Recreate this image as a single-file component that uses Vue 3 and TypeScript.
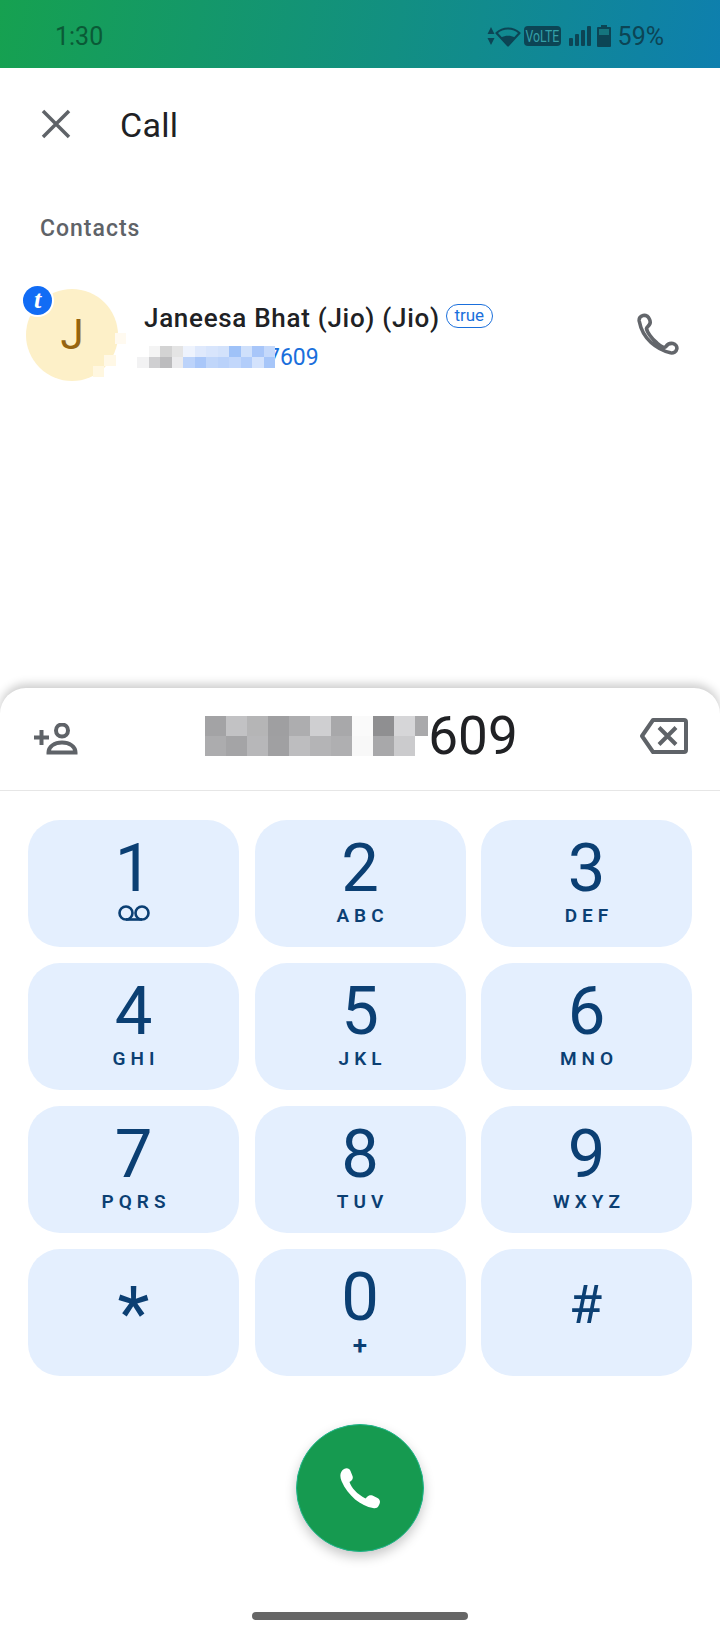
<script setup lang="ts">
interface Key {
  digit: string
  sub?: string
}

const keys: Key[] = [
  { digit: '1' },
  { digit: '2', sub: 'ABC' },
  { digit: '3', sub: 'DEF' },
  { digit: '4', sub: 'GHI' },
  { digit: '5', sub: 'JKL' },
  { digit: '6', sub: 'MNO' },
  { digit: '7', sub: 'PQRS' },
  { digit: '8', sub: 'TUV' },
  { digit: '9', sub: 'WXYZ' },
  { digit: '*' },
  { digit: '0', sub: '+' },
  { digit: '#' },
]

// pixelated part of the phone numbers, as in the screenshot
const dialBlur = [
  '#a3a3a5', '#c2c2c4', '#b5b5b6', '#9f9fa1', '#adadaf', '#cfcfd1', '#a8a8aa', '#fafafa', '#8f8f91', '#d6d6d8', '#a9a9ab',
  '#acacae', '#a4a4a6', '#b7b7b9', '#a0a0a2', '#bdbdbf', '#b4b4b6', '#afafb1', '#f8f8f8', '#a8a8aa', '#cbcbcd', '#ffffff',
]
const rowBlur = [
  '#ffffff', '#f4f4f4', '#d3d3d3', '#e4e4e4', '#eef3fd', '#dfe9fc', '#d8e5fc', '#d3e2fb', '#9fc2f8', '#cfe0fb', '#a8c6f9', '#c5d9fb',
  '#f2f2f3', '#cfcfd1', '#bcbcbe', '#ebebed', '#bcd3fa', '#a9c7f9', '#c0d6fa', '#bad2fa', '#c2d7fb', '#b2cdfa', '#d3e2fc', '#a7c6f9',
]
</script>

<template>
  <div class="page">
    <header class="status">
      <span class="time">1:30</span>
      <div class="status-icons">
        <svg class="arrows" width="8" height="20" viewBox="0 0 8 20">
          <path d="M4 1l3.500 7h-7zM4 19l-3.500-7h7z" />
        </svg>
        <svg class="wifi" width="26" height="22" viewBox="0 0 26 22">
          <path d="M13 20.500L1.500 8c6.500-6 16.500-6 23 0z" fill="none" stroke="currentColor" stroke-width="2.200" stroke-linejoin="round" />
          <path d="M13 21L6 12.500c4.500-2.500 9.500-2.500 14 0z" />
        </svg>
        <span class="volte"><span>VoLTE</span></span>
        <svg class="signal" width="22" height="20" viewBox="0 0 22 20">
          <rect x="0" y="12" width="4" height="8" rx="1" />
          <rect x="6" y="8" width="4" height="12" rx="1" />
          <rect x="12" y="4" width="4" height="16" rx="1" />
          <rect x="18" y="0" width="4" height="20" rx="1" />
        </svg>
        <svg class="battery" width="14" height="22" viewBox="0 0 14 22">
          <path d="M4 0h6v2h3a1 1 0 0 1 1 1v18a1 1 0 0 1-1 1H1a1 1 0 0 1-1-1V3a1 1 0 0 1 1-1h3z" />
          <rect x="2" y="4" width="10" height="6" fill="#1a8a90" opacity="0.7" />
        </svg>
        <span class="percent">59%</span>
      </div>
    </header>

    <main class="main">
      <div class="toolbar">
        <svg class="close" width="30" height="30" viewBox="0 0 30 30">
          <path d="M2 2l26 26M28 2L2 28" />
        </svg>
        <h1 class="title">Call</h1>
      </div>
      <div class="section">Contacts</div>
      <div class="contact">
        <div class="avatar">
          J
          <span class="badge"><i>t</i></span>
          <span class="av-blur b1" />
          <span class="av-blur b2" />
          <span class="av-blur b3" />
        </div>
        <div class="info">
          <div class="name-line">
            <span class="name">Janeesa Bhat (Jio) (Jio)</span>
            <span class="true-tag">true</span>
          </div>
          <div class="number-line">
            <div class="row-blur">
              <span v-for="(c, i) in rowBlur" :key="i" :style="{ background: c }" />
            </div>
            <span class="number">7609</span>
          </div>
        </div>
        <svg class="contact-call" width="42" height="42" viewBox="0 0 42 42">
          <path d="M6 2.500C3.500 3 1.800 5.200 2.200 8 3.800 16.500 8 24 14 29.500 19.500 34.500 26 38 33.500 39.800 36.500 40.300 39.300 38.800 39.800 36 40.300 33.500 38.500 31 36 30.500 33 30 30.500 31 29 33.500 27.500 35.500 24 33.500 20 30 14.500 25.500 9.800 18.500 9.500 15.500 9.800 14 12 13 13 10.500 13.800 8 12 4.500 10 3 8.800 2.300 7.500 2.200 6 2.500z" />
        </svg>
      </div>
    </main>

    <section class="sheet">
      <div class="dial-row">
        <svg class="add" width="46" height="32" viewBox="0 0 46 32">
          <path class="plus" d="M0 14.500h15M7.500 7v15" />
          <circle cx="28" cy="7.500" r="6" />
          <path class="dome" d="M14.500 29.500c0-6 6-10 13.500-10s13.500 4 13.500 10z" />
        </svg>
        <div class="dialed">
          <div class="dial-blur">
            <span v-for="(c, i) in dialBlur" :key="i" :style="{ background: c }" />
          </div>
          <span class="dial-num">609</span>
        </div>
        <svg class="backspace" width="48" height="36" viewBox="0 0 48 36">
          <path d="M13 2h31a2 2 0 0 1 2 2v28a2 2 0 0 1-2 2H13L2 18z" />
          <path d="M19 9.500l17 17M36 9.500l-17 17" />
        </svg>
      </div>

      <div class="keypad">
        <button v-for="k in keys" :key="k.digit" class="key">
          <span class="digit" :class="{ star: k.digit === '*', hash: k.digit === '#' }">{{ k.digit }}</span>
          <svg v-if="k.digit === '1'" class="vm" width="32" height="16" viewBox="0 0 32 16">
            <circle cx="8" cy="8" r="6.500" />
            <circle cx="24" cy="8" r="6.500" />
            <path d="M8 14.500h16" />
          </svg>
          <span v-else-if="k.sub" class="sub" :class="{ plus: k.sub === '+' }">{{ k.sub }}</span>
        </button>
      </div>

      <button class="call">
        <svg width="41" height="41" viewBox="0 0 41 41">
          <path d="M4 1C7-.5 9.500.5 10.500 3L12.500 8C13.300 10 12.500 12 11 13L9.500 14C11.500 20 17 26 25.500 30.500L27.500 28.500C29 27 31 27 32.500 27.500L37.500 30C40 31.500 40.500 33.500 39.500 36L38.500 38C37.500 40 35.500 40.500 33 40 21 38 8 28 1.500 13-.5 8 0 3.500 4 1z" />
        </svg>
      </button>
      <div class="home-bar" />
    </section>
  </div>
</template>

<style scoped>
.page {
  width: 720px;
  height: 1640px;
  display: flex;
  flex-direction: column;
  background: #fff;
  font-family: Roboto, "Noto Sans", sans-serif;
  overflow: hidden;
}

.status {
  height: 68px;
  flex: none;
  box-sizing: border-box;
  display: flex;
  align-items: center;
  justify-content: space-between;
  padding: 4px 56px 0 55px;
  background: linear-gradient(100deg, #16a150 0%, #128f82 55%, #0e7fae 100%);
  font-size: 25px;
}
.time { color: #0a5a36; }
.status-icons {
  display: flex;
  align-items: center;
  color: #0c4555;
}
.status-icons svg { fill: currentColor; flex: none; }
.volte {
  width: 37px;
  height: 20px;
  margin: 0 8px 0 3px;
  border-radius: 4px;
  background: #0c4555;
  color: #35a0a8;
  font-size: 17px;
  line-height: 20px;
  display: flex;
  justify-content: center;
  overflow: hidden;
}
.volte span { display: block; transform: scaleX(0.72); }
.battery { margin: 0 7px 0 6px; }
.percent { color: #0c4555; }

.main {
  height: 620px;
  flex: none;
}
.toolbar {
  height: 112px;
  display: flex;
  align-items: center;
  padding-left: 41px;
}
.close { fill: none; stroke: #5f6368; stroke-width: 3.500; }
.title {
  margin: 2px 0 0 49px;
  font-size: 34px;
  font-weight: 400;
  letter-spacing: 0.3px;
  color: #202124;
}
.section {
  margin-top: 33px;
  padding-left: 40px;
  font-size: 23px;
  font-weight: 500;
  line-height: 32px;
  letter-spacing: 1px;
  color: #5f6368;
}
.contact {
  margin-top: 44px;
  padding-left: 26px;
  display: flex;
  align-items: center;
}
.avatar {
  position: relative;
  width: 92px;
  height: 92px;
  flex: none;
  border-radius: 50%;
  background: #fdf0c8;
  color: #96640f;
  font-size: 42px;
  line-height: 92px;
  text-align: center;
}
.badge {
  position: absolute;
  left: -3px;
  top: -3px;
  width: 29px;
  height: 29px;
  border-radius: 50%;
  background: #116cf5;
  box-shadow: 0 0 0 2px #fff;
  color: #fff;
  font-size: 26px;
  line-height: 27px;
  font-weight: 700;
  font-family: "Liberation Serif", serif;
  text-align: center;
}
.av-blur { position: absolute; width: 11px; height: 11px; }
.b1 { left: 89px; top: 44px; background: #fffaf0; }
.b2 { left: 78px; top: 66px; background: #fff8e6; width: 12px; }
.b3 { left: 67px; top: 77px; background: #fff7e0; }
.info {
  margin-left: 26px;
  flex: 1;
  margin-top: 2px;
}
.name-line {
  display: flex;
  align-items: center;
  margin-top: -2px;
}
.name {
  font-size: 26px;
  font-weight: 500;
  letter-spacing: 0.7px;
  line-height: 34px;
  color: #202124;
}
.true-tag {
  margin: -4px 0 0 6px;
  height: 24px;
  width: 47px;
  box-sizing: border-box;
  border: 1.500px solid #1a6fdc;
  border-radius: 12px;
  color: #1a6fdc;
  font-size: 17px;
  line-height: 20px;
  text-align: center;
}
.number-line {
  display: flex;
  align-items: center;
  margin: 10px 0 0 -7px;
  height: 24px;
}
.row-blur {
  position: relative;
  z-index: 1;
  display: grid;
  grid-template-columns: repeat(12, 11.500px);
  grid-auto-rows: 11px;
}
.number {
  color: #1a6fdc;
  font-size: 23px;
  margin-left: -8px;
}
.contact-call {
  margin: -2px 41px 0 0;
  fill: none;
  stroke: #63666b;
  stroke-width: 3.600;
  stroke-linejoin: round;
}

.sheet {
  flex: 1;
  border-radius: 26px 26px 0 0;
  background: #fff;
  box-shadow: 0 -4px 10px rgba(0, 0, 0, 0.2);
  display: flex;
  flex-direction: column;
  align-items: center;
}
.dial-row {
  width: 100%;
  height: 103px;
  flex: none;
  box-sizing: border-box;
  border-bottom: 1px solid #e6e6e6;
  padding: 0 32px 0 34px;
  display: flex;
  align-items: center;
  justify-content: space-between;
}
.add { fill: none; stroke: #5f6368; stroke-width: 4; }
.add .dome { fill: none; }
.dialed {
  display: flex;
  align-items: center;
  margin: -6px 0 0 3px;
}
.dial-blur {
  display: grid;
  grid-template-columns: repeat(11, 21px);
  grid-auto-rows: 20px;
  width: 223px;
  overflow: hidden;
}
.dial-num {
  font-size: 53px;
  line-height: 60px;
  color: #202124;
}
.backspace {
  margin-top: -7px;
  fill: none;
  stroke: #5f6368;
  stroke-width: 4;
  stroke-linejoin: round;
}

.keypad {
  width: 664px;
  margin-top: 29px;
  display: grid;
  grid-template-columns: repeat(3, 211px);
  grid-auto-rows: 127px;
  gap: 16px 15.500px;
}
.key {
  border: 0;
  padding: 15px 0 0;
  border-radius: 32px;
  background: #e4effe;
  color: #0b3f73;
  font-family: inherit;
  display: flex;
  flex-direction: column;
  align-items: center;
}
.digit {
  font-size: 67px;
  line-height: 66px;
  height: 66px;
}
.hash { font-size: 54px; margin-top: 8px; margin-right: 2px; }
.star { font-size: 74px; margin-top: 17px; }
.sub {
  margin-top: 3px;
  font-size: 19px;
  line-height: 24px;
  font-weight: 600;
  letter-spacing: 5px;
  margin-right: -5px;
}
.sub.plus { font-size: 26px; letter-spacing: 0; margin-right: 0; }
.vm {
  margin-top: 4px;
  fill: none;
  stroke: currentColor;
  stroke-width: 2.600;
}

.call {
  width: 128px;
  height: 128px;
  margin-top: 48px;
  padding: 0;
  border: 1px solid #1db58a;
  border-radius: 50%;
  background: #169a50;
  box-shadow: 0 5px 12px rgba(0, 0, 0, 0.22);
  display: flex;
  align-items: center;
  justify-content: center;
}
.call svg { fill: #fff; }
.home-bar {
  width: 216px;
  height: 8px;
  margin-top: 60px;
  border-radius: 4px;
  background: #666;
}
</style>

<style>
html, body { margin: 0; }
</style>
